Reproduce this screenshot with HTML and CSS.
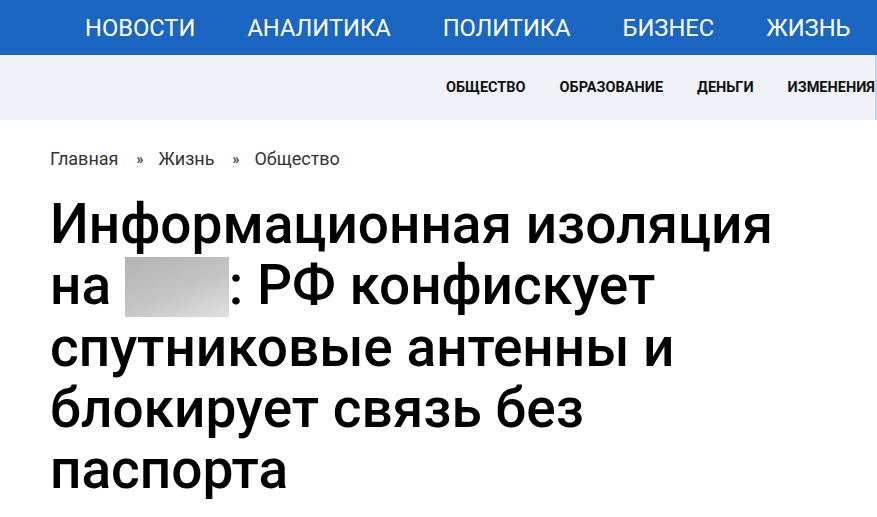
FILE: index.html
```html
<!DOCTYPE html>
<html lang="ru">
<head>
  <meta charset="UTF-8" />
  <meta name="viewport" content="width=device-width, initial-scale=1.0"/>
  <title>Информационная изоляция</title>
  <link rel="stylesheet" href="styles.css">
</head>
<body>
  <header class="topbar">
    <nav class="main-nav">
      <a href="#">НОВОСТИ</a>
      <a href="#">АНАЛИТИКА</a>
      <a href="#">ПОЛИТИКА</a>
      <a href="#">БИЗНЕС</a>
      <a href="#">ЖИЗНЬ</a>
    </nav>
  </header>

  <div class="subbar">
    <nav class="sub-nav">
      <a href="#">ОБЩЕСТВО</a>
      <a href="#">ОБРАЗОВАНИЕ</a>
      <a href="#">ДЕНЬГИ</a>
      <a href="#">ИЗМЕНЕНИЯ</a>
    </nav>
  </div>

  <main class="article">
    <div class="crumbs">
      <a href="#">Главная</a><span class="sep">»</span><a href="#">Жизнь</a><span class="sep">»</span><a href="#">Общество</a>
    </div>

    <h1>Информационная изоляция на <span class="blur"></span>: РФ конфискует спутниковые антенны и блокирует связь без паспорта</h1>
  </main>
</body>
</html>
```

FILE: styles.css
```css
body {
  margin: 0;
  font-family: Roboto, "Noto Sans", sans-serif;
  background: #ffffff;
  color: #000000;
  overflow: hidden;
}

a {
  text-decoration: none;
  color: inherit;
}

.topbar {
  background: #1a66c0;
  height: 55px;
  overflow: hidden;
}

.main-nav {
  display: flex;
  gap: 52px;
  padding-left: 85px;
  height: 100%;
  align-items: center;
  white-space: nowrap;
}

.main-nav a {
  color: #ffffff;
  font-size: 23.7px;
}

.subbar {
  background: #eff3f7;
  height: 65px;
  overflow: hidden;
  border-right: 2px solid #bcd4ef;
}

.sub-nav {
  display: flex;
  gap: 34px;
  padding-left: 446px;
  height: 100%;
  align-items: center;
  white-space: nowrap;
}

.sub-nav a {
  font-size: 14.5px;
  font-weight: bold;
  color: #111;
}

.article {
  padding: 28px 50px 0;
}

.crumbs {
  font-size: 18px;
  color: #333;
}

.crumbs .sep {
  margin: 0 15px 0 18px;
  font-size: 14px;
  font-weight: bold;
  vertical-align: 1px;
}

h1 {
  margin: 25px 0 0;
  font-size: 55px;
  font-weight: 500;
  line-height: 61px;
  max-width: 790px;
}

.blur {
  display: inline-block;
  width: 104px;
  height: 60px;
  vertical-align: -13px;
  background: linear-gradient(160deg, #b3b3b3, #c4c4c4 55%, #e0e0e0);
}
```
